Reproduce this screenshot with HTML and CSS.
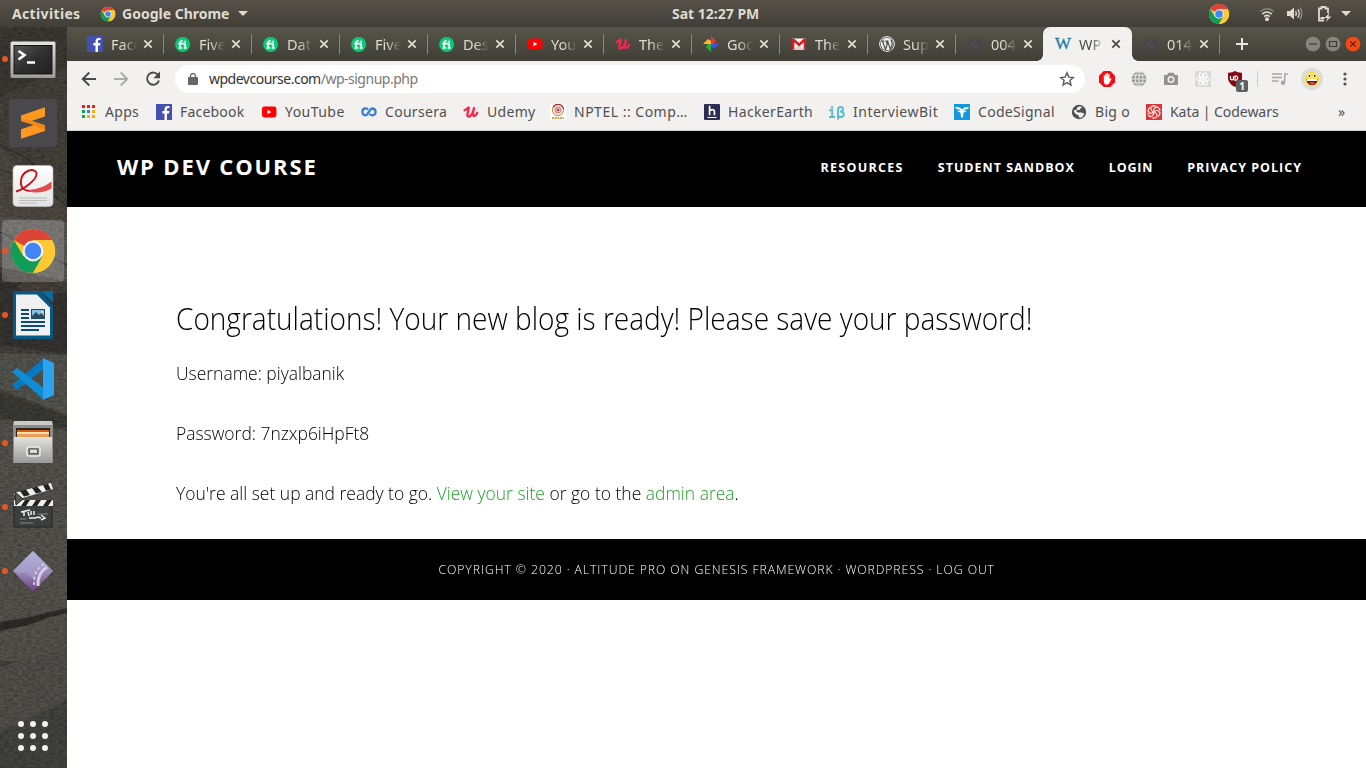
FILE: index.html
```html
<!DOCTYPE html>
<html lang="en">
<head>
<meta charset="utf-8">
<title>WP Dev Course</title>
<link rel="stylesheet" href="styles.css">
</head>
<body>
<svg class="defs" width="0" height="0">
  <defs>
    <linearGradient id="steel" x1="0" y1="0" x2="0" y2="1"><stop offset="0" stop-color="#e2e2e0"/><stop offset="1" stop-color="#999"/></linearGradient>
    <linearGradient id="screen" x1="0" y1="0" x2="1" y2="1"><stop offset="0" stop-color="#555"/><stop offset=".5" stop-color="#303030"/><stop offset="1" stop-color="#222"/></linearGradient>
    <linearGradient id="paper" x1="0" y1="0" x2="0" y2="1"><stop offset="0" stop-color="#fff"/><stop offset="1" stop-color="#e2e2e2"/></linearGradient>
    <linearGradient id="gem" x1="0" y1="0" x2="0" y2="1"><stop offset="0" stop-color="#bcc6ec"/><stop offset=".55" stop-color="#9886b4"/><stop offset="1" stop-color="#6c3f7c"/></linearGradient>
    <symbol id="chrome" viewBox="0 0 48 48"><circle cx="24" cy="24" r="22" fill="#fcc934"/><path d="M24 24L4.9 13A22 22 0 0 1 43.1 13H24z" fill="#db4437"/><path d="M4.9 13A22 22 0 0 0 24 46L33.5 29.5 24 24 14.5 29.5z" fill="#0f9d58"/><path d="M24 13h19.1A22 22 0 0 1 24 46l9.5-16.5z" fill="#fcc934"/><circle cx="24" cy="24" r="10.4" fill="#f1f1f1"/><circle cx="24" cy="24" r="8.2" fill="#4285f4"/></symbol>
    <symbol id="fb" viewBox="0 0 16 16"><path fill="#4550b0" d="M0 0h16v16H0z"/><path fill="#fff" d="M8.5 16V9.6H6.3V7.1h2.2V5.3c0-2.2 1.3-3.4 3.3-3.4.9 0 1.7.1 1.7.1v2h-1.1c-1.1 0-1.4.6-1.4 1.3v1.8h2.4l-.4 2.5h-2V16z"/></symbol>
    <symbol id="fi" viewBox="0 0 16 16"><circle cx="7.600" cy="8.400" r="7.500" fill="#0cca74"/><path fill="none" stroke="#fff" stroke-width="1.700" d="M5.200 12V6.400q0-1.600 2.400-1.300M3.300 7.700h6.900V12M3.500 12H7M8.600 12h3.200"/><circle cx="10" cy="5.400" r="1" fill="#fff"/></symbol>
    <symbol id="yt" viewBox="0 0 16 16"><rect x="1" y="2.500" width="14.400" height="11" rx="2.400" fill="#f00"/><path fill="#fff" d="M6.500 5.800v4.400L10.300 8z"/></symbol>
    <symbol id="udemy" viewBox="0 0 16 16"><path fill="none" stroke="#f5274a" stroke-width="2.300" stroke-linecap="round" d="M1.500 6.300C4.800 5 6.300 1.500 5.700 5 4.200 10.800 3.500 13 6.200 12.500c2-.5 3.900-4 5.100-9.200-1.800 6.800-1.700 9 .2 8.600 1.400-.4 2.100-1.500 2.700-3"/></symbol>
    <symbol id="photos" viewBox="0 0 16 16"><path fill="#e53935" d="M8 8V0l5 5-2 3z"/><path fill="#4451dd" d="M8 8h8l-5 5-3-2z"/><path fill="#26b33c" d="M8 8v8l-5-5 2-3z"/><path fill="#ffba1a" d="M8 8H0l5-5 3 2z"/></symbol>
    <symbol id="gmail" viewBox="0 0 16 16"><path fill="#f5f5f5" d="M1 2.500h14v11.200H1z"/><path fill="#d5d5d5" d="M3 13.700l5-5 5 5z"/><path fill="#d71c1c" d="M1 13.700V2.500h2L8 7l5-4.500h2v11.200h-2.300V6.300L8 10.400 3.300 6.300v7.400z"/></symbol>
    <symbol id="wp" viewBox="0 0 16 16"><circle cx="8" cy="8" r="7.400" fill="none" stroke="#eee" stroke-width="1"/><circle cx="8" cy="8" r="6.200" fill="#eee"/><path fill="none" stroke="#50504a" stroke-width="1.200" d="M2.500 5.200h2.800M3.600 5.500l3 8L8.300 8 7.200 5.200H6.400 9.500M8.600 5.500l3 8 1.800-6-1.200-2.300.4-1.500"/></symbol>
    <symbol id="globe" viewBox="0 0 16 16"><circle cx="8" cy="8" r="7.200" fill="currentColor"/><path fill="var(--cut)" d="M6.400 3.100c2-1 3.900-.5 4.900.5l-2.200.8.2 1.700-2.400-.4-2 1.400L7 8.400l3.600.1 2.900 1.300-2.200 3.300-2.800.8-.6-2.200-3.600-1.900-1.700-3 1.600-.9 1.700-.6z"/></symbol>
    <symbol id="cross" viewBox="0 0 10 10"><path fill="none" stroke="currentColor" stroke-width="1.800" d="M1.300 1.300l7.400 7.400M8.700 1.300L1.300 8.700"/></symbol>
  </defs>
</svg>

<header class="topbar">
  <span class="activities">Activities</span>
  <svg class="i16 app-icon"><use href="#chrome"/></svg>
  <span class="app-name">Google Chrome</span>
  <i class="caret"></i>
  <span class="clock">Sat 12:27 PM</span>
  <div class="tray">
    <svg width="22" height="22"><use href="#chrome"/></svg>
    <svg class="wifi" width="16" height="16" viewBox="0 0 16 16" fill="none" stroke-width="1.600"><path stroke="#85837c" d="M1.200 5.500Q8 0 14.800 5.500"/><path stroke="#dfdbd2" d="M3.200 8.100Q8 3.900 12.800 8.100M5.200 10.600Q8 8.100 10.800 10.600"/><circle cx="8" cy="13.200" r="2" fill="#dfdbd2"/></svg>
    <svg class="vol" width="16" height="16" viewBox="0 0 16 16" fill="none" stroke="#dfdbd2" stroke-width="1.300"><path fill="#dfdbd2" stroke="none" d="M0 5h3l4-3.500v12L3 10H0z"/><path d="M8.600 5q1.600 2.400 0 4.800M10.800 3.500q3 4 0 8"/><path stroke="#908e87" d="M13 1.700q3.700 5.800 0 11.600"/></svg>
    <svg class="bat" width="15" height="17" viewBox="0 0 15 17"><path fill="none" stroke="#dfdbd2" stroke-width="1.800" d="M7 15.500H2v-12h2.500V2h4v1.500H11V8"/><path fill="#dfdbd2" d="M3.500 12h4v2h-4zM12.700 7.500L7.500 13h3L8.800 17l5.500-5.500h-3z"/></svg>
    <i class="caret"></i>
  </div>
</header>

<div class="desktop">
  <nav class="dock">
    <svg class="rock" width="67" height="741">
      <filter id="grain"><feTurbulence type="fractalNoise" baseFrequency=".22 .5" numOctaves="3" seed="4"/><feColorMatrix values="0 0 0 0 0  0 0 0 0 0  0 0 0 0 0  1.2 0 0 0 -.38"/></filter>
      <path fill="#46423c" d="M0 0h67v741H0z"/>
      <path fill="#3b3a33" d="M0 0h67v40L0 70z"/>
      <path fill="#4f4a43" d="M0 120l67 60v60H0z"/>
      <path fill="#5b5954" d="M0 190l67 5v60L0 240z"/>
      <path fill="#363532" d="M0 245l30 25 37-5v62L0 318z"/>
      <path fill="#555550" d="M0 326l67 2v60L0 362z"/>
      <path fill="#3b3b37" d="M0 366l67 24v10L0 390z"/>
      <path fill="#56544e" d="M0 392l67 12v230H0z"/>
      <path fill="#2e2d2a" d="M0 595l25-4 42-10v5l-20 5-18 7L0 604z"/>
      <path fill="#52514c" d="M0 640l67-20v121H0z"/>
      <path fill="#444541" d="M0 706l67-33v68H0z"/>
      <path fill="none" stroke="#2c2b27" stroke-width="1.500" opacity=".6" d="M0 118l25 12 42 38M0 143l34 9 33 28M0 262l22-6M0 205l67 33"/>
      <path filter="url(#grain)" opacity=".45" d="M0 0h67v741H0z"/>
    </svg>
    <div class="dock-items">
      <a class="dock-item running"><svg width="48" height="48" viewBox="0 0 48 48"><rect x="1.500" y="6.500" width="45" height="36.500" rx="1.500" fill="url(#steel)"/><path fill="#eee" d="M4 9h40v31.500H4z" opacity=".3"/><rect x="5" y="10.500" width="38" height="28.500" fill="url(#screen)" stroke="#111"/><path fill="none" stroke="#fff" stroke-width="2.600" d="M9.500 16l6 4-6 4.500M18 27.500h8"/></svg></a>
      <a class="dock-item"><svg width="48" height="48" viewBox="0 0 48 48"><rect width="48" height="48" rx="3" fill="#49494b"/><path fill="#ff9821" d="M12 16.500L36 8.300v9.200L23 21.800l13 4.400v5.700L12 39.700v-9.400l12.800-4.200L12 22z"/><path fill="#e57a0b" d="M23 21.800l13 4.400v5.200l-11.200-5.300L12 22.200v-2z" opacity=".55"/></svg></a>
      <a class="dock-item"><svg width="48" height="48" viewBox="0 1.500 48 48"><rect x="4" y="4" width="40" height="41" rx="4" fill="url(#paper)" stroke="#bbb" stroke-width=".7"/><path fill="none" stroke="#c8131d" stroke-width="1.900" d="M7 30C14 28 29 18 27.500 11.500 25.500 5.500 13 9 12 19 11 28 17 30 24 29.500"/><path fill="#dd4b4c" d="M20 28.500Q34 27 42.500 20v7q-10 5.500-22.500 3.200z"/><path stroke="#bbb" d="M10 36.500h28M10 39h28M10 41.500h18"/></svg></a>
      <a class="dock-item running focused"><svg width="48" height="48"><use href="#chrome"/></svg></a>
      <a class="dock-item running"><svg width="48" height="48" viewBox="0 0 48 48"><path fill="#075988" d="M6 0h25l13 15v31q0 2-2 2H6q-2 0-2-2V2q0-2 2-2z"/><path fill="#0a6a9f" d="M32 0h12v12z"/><path fill="#f0f0f0" d="M7 3.500h21l13 13v28H7z"/><path fill="#075988" d="M28 3.500h3l10 11v2z"/><path stroke="#0b4b78" stroke-width="2" d="M12 19h8M12 23h8M12 27h8M12 31h24M12 35h24M12 39h18"/><path fill="#1b4a68" d="M22 18h14v10H22z"/><path fill="#83c2e9" d="M23 19h12v7H23z"/><path fill="#34495a" d="M23 27v-2l4-4 3 3 2-2 3 3v2z"/><circle cx="33" cy="21" r="1" fill="#ffe26a"/></svg></a>
      <a class="dock-item"><svg width="48" height="48" viewBox="0 0 48 48"><path fill="#0879bf" d="M3 30l5 5L35 14V3z"/><path fill="#108cd4" d="M3 17l5-4 27 20v12z"/><path fill="#2ba3ee" d="M34 3l11 5v32l-11 5z"/></svg></a>
      <a class="dock-item running"><svg width="48" height="48" viewBox="0 0 48 48"><path fill="#c9c9c7" d="M5 2h38l1 5H4z"/><path fill="#8d8d8b" d="M4 6h40v38H4z"/><path fill="#292620" d="M7 9h34v10H7z"/><path fill="#d85b16" d="M8 11h32v8H8z"/><path fill="#f9dfaa" d="M8 13h32v2.500H8z"/><path fill="#eaa250" d="M8 16h32v3H8z"/><path fill="url(#steel)" d="M5 18h38v26H5z"/><rect x="18" y="28" width="13" height="9" rx="2" fill="#888" stroke="#eee" stroke-width="1.500"/><path fill="#ddd" stroke="#555" d="M20.500 30h8v4.500h-8z"/></svg></a>
      <a class="dock-item running"><svg width="48" height="48" viewBox="0 0 48 48"><path fill="#3d3e3e" stroke="#222" d="M5 22h38v22H5z"/><path fill="#eee" d="M5 10L42 0l2 6L7 17zM5 17h39v6H5z"/><path fill="#222" d="M11 8l6-1.600 4 5.500-6 1.600zM23 5l5-1.400 5 5.300-6 1.500zM34 2l5-1.300 3 5.800-5 1.300zM16 17h5l-4 6h-5zM27 17h5l-4 6h-5zM38 17h5l-4 6h-5z"/><path fill="#555" stroke="#222" d="M6 9l8 7-7 6z"/><path fill="none" stroke="#eee" stroke-width="1.500" d="M12 29l9-2M15 28v5M19 29l1 4M22 28v4M25 28v4M20 35h6l3-1 3 1M32 32l4 3-4 2"/><path stroke="#888" d="M11 40h13M11 36h6M29 31h10"/></svg></a>
      <a class="dock-item running"><svg width="48" height="48" viewBox="0 0 48 48"><path fill="url(#gem)" d="M24 4l20 20-20 21L4 24z"/><path fill="#a9a5cf" opacity=".55" d="M24 4l14 14q-12 5-12 18l-3-6-4-1-1-4-6 1-8-2z"/><path fill="none" stroke="#dacde6" stroke-width="3" d="M38 20q-10 6-9 19"/><path fill="none" stroke="#dacde6" stroke-width="2" stroke-dasharray="2.500 3" d="M35 17q-12 7-9.500 24"/></svg></a>
    </div>
    <svg class="grid-icon" width="32" height="32" viewBox="0 0 32 32" fill="#f2f1f0"><circle cx="4" cy="4" r="3"/><circle cx="16" cy="4" r="3"/><circle cx="28" cy="4" r="3"/><circle cx="4" cy="16" r="3"/><circle cx="16" cy="16" r="3"/><circle cx="28" cy="16" r="3"/><circle cx="4" cy="28" r="3"/><circle cx="16" cy="28" r="3"/><circle cx="28" cy="28" r="3"/></svg>
  </nav>

  <div class="browser">
    <div class="tabs">
      <div class="tab"><svg class="i16"><use href="#fb"/></svg><span>Face</span><svg class="x"><use href="#cross"/></svg></div>
      <div class="tab"><svg class="i16"><use href="#fi"/></svg><span>Five</span><svg class="x"><use href="#cross"/></svg></div>
      <div class="tab"><svg class="i16"><use href="#fi"/></svg><span>Dat</span><svg class="x"><use href="#cross"/></svg></div>
      <div class="tab"><svg class="i16"><use href="#fi"/></svg><span>Five</span><svg class="x"><use href="#cross"/></svg></div>
      <div class="tab"><svg class="i16"><use href="#fi"/></svg><span>Des</span><svg class="x"><use href="#cross"/></svg></div>
      <div class="tab"><svg class="i16"><use href="#yt"/></svg><span>You</span><svg class="x"><use href="#cross"/></svg></div>
      <div class="tab"><svg class="i16"><use href="#udemy"/></svg><span>The</span><svg class="x"><use href="#cross"/></svg></div>
      <div class="tab"><svg class="i16"><use href="#photos"/></svg><span>Goo</span><svg class="x"><use href="#cross"/></svg></div>
      <div class="tab"><svg class="i16"><use href="#gmail"/></svg><span>The</span><svg class="x"><use href="#cross"/></svg></div>
      <div class="tab"><svg class="i16"><use href="#wp"/></svg><span>Sup</span><svg class="x"><use href="#cross"/></svg></div>
      <div class="tab before-active"><svg class="i16 dim"><use href="#globe"/></svg><span>004</span><svg class="x"><use href="#cross"/></svg></div>
      <div class="tab active"><b class="w-icon">W</b><span>WP</span><svg class="x"><use href="#cross"/></svg></div>
      <div class="tab"><svg class="i16 dim"><use href="#globe"/></svg><span>014</span><svg class="x"><use href="#cross"/></svg></div>
      <svg class="new-tab" width="14" height="14" viewBox="0 0 14 14"><path stroke="#e8e6e0" stroke-width="2" d="M7 1v12M1 7h12"/></svg>
      <div class="window-buttons">
        <svg width="16" height="16" viewBox="0 0 16 16"><circle cx="8" cy="8" r="7.800" fill="#85847d" stroke="#3a3934" stroke-width=".6"/><path stroke="#3a3934" stroke-width="1.200" d="M4 8h8"/></svg>
        <svg width="16" height="16" viewBox="0 0 16 16"><circle cx="8" cy="8" r="7.800" fill="#85847d" stroke="#3a3934" stroke-width=".6"/><path fill="none" stroke="#3a3934" stroke-width="1.200" d="M4.500 5.500h7v5h-7z"/></svg>
        <svg width="16" height="16" viewBox="0 0 16 16"><circle cx="8" cy="8" r="7.800" fill="#f04a15" stroke="#3a3934" stroke-width=".6"/><path stroke="#5b1f0c" stroke-width="1.200" d="M5.300 5.300l5.400 5.400M10.700 5.300l-5.400 5.400"/></svg>
      </div>
    </div>

    <div class="toolbar">
      <svg class="nav-icon" width="16" height="16" viewBox="0 0 16 16" fill="none" stroke="#48494a" stroke-width="1.900"><path d="M15 8H2M8.300 1.500L1.700 8l6.600 6.500"/></svg>
      <svg class="nav-icon fwd" width="16" height="16" viewBox="0 0 16 16" fill="none" stroke="#aaa" stroke-width="1.900"><path d="M1 8h13M7.700 1.500L14.300 8l-6.600 6.500"/></svg>
      <svg class="nav-icon" width="16" height="16" viewBox="0 0 16 16" fill="none" stroke="#48494a" stroke-width="1.900"><path d="M13.400 4.500A6.100 6.100 0 1 0 14 9.500"/><path fill="#48494a" stroke="none" d="M15 .5v6.700H8.300z"/></svg>
      <div class="omnibox">
        <svg class="lock" width="10" height="12" viewBox="0 0 10 12"><path fill="#666" d="M1 4h8q1 0 1 1v6q0 1-1 1H1q-1 0-1-1V5q0-1 1-1z"/><path fill="none" stroke="#666" stroke-width="1.300" d="M2.500 4.500V3a2.500 2.400 0 0 1 5 0v1.500"/></svg>
        <span class="url"><b>wpdevcourse.com</b>/wp-signup.php</span>
        <svg class="star" width="16" height="16" viewBox="0 0 16 16"><path fill="none" stroke="#5a5b5d" stroke-width="1.400" d="M8 1.900l1.800 4.200 4.600.4-3.500 3 1.100 4.500L8 11.600 4 14l1.100-4.500-3.500-3 4.600-.4z"/></svg>
      </div>
      <div class="extensions">
        <svg width="16" height="16" viewBox="0 0 16 16"><path fill="#f40d12" d="M4.700 0h6.600L16 4.700v6.600L11.300 16H4.700L0 11.300V4.700z"/><path fill="#fff" d="M4.800 4.200q.7-.5 1 .2l.3 2.500V3q.7-.8 1.200 0v3.500L7.600 2.300q.8-.7 1.300 0l.1 4.200.4-3.400q.8-.5 1.200.2v5l1-1q1-.2.9.5L10 12.700q-2.500 2-4.500 0-.9-1.500-.7-4z"/></svg>
        <svg width="16" height="16" viewBox="0 0 16 16"><circle cx="8" cy="8" r="7.400" fill="#999"/><path fill="none" stroke="#eee" stroke-width=".9" d="M8 0v16M0 8h16M1.500 4.300h13M1.500 11.700h13"/><ellipse cx="8" cy="8" rx="3.900" ry="7.400" fill="none" stroke="#eee" stroke-width=".9"/></svg>
        <svg width="16" height="16" viewBox="0 0 16 16"><path fill="#929292" d="M1 4h3l1.500-2.200h5L12 4h3v10H1z"/><circle cx="8" cy="8.500" r="3.500" fill="#f2f1ef"/><circle cx="8" cy="8.500" r="1.900" fill="#929292"/></svg>
        <svg width="16" height="16" viewBox="0 0 16 16"><path fill="#d9d9d7" d="M0 0h16v16H0z"/><g fill="none" stroke="#fff" stroke-width="1"><ellipse cx="8" cy="8" rx="6.600" ry="2.500"/><ellipse cx="8" cy="8" rx="6.600" ry="2.500" transform="rotate(60 8 8)"/><ellipse cx="8" cy="8" rx="6.600" ry="2.500" transform="rotate(120 8 8)"/></g><circle cx="8" cy="8" r="1.500" fill="#fff"/></svg>
        <div class="ublock"><svg width="16" height="16" viewBox="0 0 16 16"><path fill="#850912" d="M8 0q3 2 7 1.800V8q-1 5-7 8-6-3-7-8V1.800Q5 2 8 0z"/><path fill="none" stroke="#fff" stroke-width="1.200" d="M3.500 5v3q1.500 1.500 3 0V5M8 9.500V5h1.500q2.500 1.800 0 4z"/></svg><em>1</em></div>
      </div>
      <i class="divider"></i>
      <svg class="queue" width="16" height="12" viewBox="0 0 16 12"><path stroke="#a5a5a5" stroke-width="1.600" d="M0 1h10M0 4.500h10M0 8h6.500M12 1h4"/><path stroke="#a5a5a5" stroke-width="1.500" d="M12.700 1v8.500"/><circle cx="11" cy="9.700" r="2.200" fill="#a5a5a5"/></svg>
      <div class="avatar"><svg width="16" height="16" viewBox="0 0 16 16"><circle cx="8" cy="8" r="7.600" fill="#ffdc48"/><path fill="#641414" d="M2.500 8h11q-.4 6-5.500 6T2.500 8z"/><path fill="#fff" d="M3 8h10v2H3z"/><path fill="#e54f55" d="M5 12q3-2 6 0-2 2.500-6 0z"/><ellipse cx="5" cy="4.500" rx="1.500" ry="2" fill="#fff"/><ellipse cx="11" cy="4.500" rx="1.500" ry="2" fill="#fff"/><circle cx="5.300" cy="4.800" r=".9"/><circle cx="10.800" cy="4.800" r=".9"/></svg></div>
      <svg class="menu" width="4" height="14" viewBox="0 0 4 14" fill="#505153"><circle cx="2" cy="2" r="1.600"/><circle cx="2" cy="7" r="1.600"/><circle cx="2" cy="12" r="1.600"/></svg>
    </div>

    <div class="bookmarks">
      <a class="bm apps"><svg width="16" height="16" viewBox="0 0 16 16"><path fill="#e8201c" d="M1 1h3v3H1zM6 1h3v3H6zM11 1h3v3h-3z"/><path fill="#16a34e" d="M1 6h3v3H1zM1 11h3v3H1z"/><path fill="#3b7ced" d="M6 6h3v3H6z"/><path fill="#f9ad0a" d="M11 6h3v3h-3zM6 11h3v3H6zM11 11h3v3h-3z"/></svg><span>Apps</span></a>
      <a class="bm facebook"><svg class="i16"><use href="#fb"/></svg><span>Facebook</span></a>
      <a class="bm youtube"><svg class="i16"><use href="#yt"/></svg><span>YouTube</span></a>
      <a class="bm coursera"><svg width="16" height="16" viewBox="0 0 16 16"><path fill="none" stroke="#3a80d2" stroke-width="2.300" d="M7 5.500Q5.500 4.300 3.800 4.500 1.400 5 1.400 8q.2 3.300 3.100 3.300C7.500 11.300 8 4.500 11.500 4.500q3 .2 3.100 3.500-.2 3.300-3.100 3.300-1.600 0-2.800-1.400"/></svg><span>Coursera</span></a>
      <a class="bm udemy"><svg class="i16"><use href="#udemy"/></svg><span>Udemy</span></a>
      <a class="bm nptel"><svg width="16" height="16" viewBox="0 0 16 16"><path fill="#fff" d="M0 0h16v16H0z"/><circle cx="8" cy="6" r="5.600" fill="#f8e9d6" stroke="#d08a35"/><path fill="none" stroke="#a8283c" stroke-width="1.100" d="M3 3.500A5.600 5.600 0 0 1 13.500 5"/><circle cx="8" cy="6" r="3" fill="#ddb3ad" stroke="#cc8180"/><circle cx="8" cy="6" r="1" fill="#9a2640"/><path stroke="#e49a40" stroke-width="2" stroke-dasharray="2 .7" d="M2 14h12"/></svg><span>NPTEL :: Comp…</span></a>
      <a class="bm hacker"><svg width="16" height="16" viewBox="0 0 16 16"><rect width="16" height="16" rx="1" fill="#2c2c55"/><path fill="none" stroke="#fff" stroke-width="1.700" d="M5.600 1.700v9.500M5.600 6.500q4.800-2 4.800 1v3.700"/><path stroke="#fff" d="M3.500 13.500h9"/></svg><span>HackerEarth</span></a>
      <a class="bm interview"><svg width="16" height="16" viewBox="0 0 16 16"><path fill="none" stroke="#5abed2" stroke-width="2" d="M0 6.300h3.200V13M0 13h6M9 15.500V6q0-3 2.700-3 2.300 0 2.300 2.200 0 2.300-3 2.300 3.800 0 3.800 2.800 0 2.700-2.800 2.700Q10 13 9 12"/><circle cx="3" cy="3.500" r="1.300" fill="#5abed2"/></svg><span>InterviewBit</span></a>
      <a class="bm signal"><svg width="16" height="16" viewBox="0 0 16 16"><path fill="#1099df" d="M0 0h16v16H0z"/><path fill="#fff" d="M.8 3l5 .5L8 5.600l2.200-2.100 5-.5-1.500 2-3.200.6-.6 1.200 2.800-.3-1.200 1.600-2 .3L9 13.500H7L6.500 8.400l-2-.3-1.200-1.600 2.800.3-.6-1.200L2.300 5z"/></svg><span>CodeSignal</span></a>
      <a class="bm bigo"><svg class="i16"><use href="#globe"/></svg><span>Big o</span></a>
      <a class="bm kata"><svg width="16" height="16" viewBox="0 0 16 16"><path fill="#dc3637" d="M0 0h16v16H0z"/><g fill="none" stroke="#ffe9e9" stroke-width="1.100"><circle cx="8" cy="8" r="6.100" stroke-dasharray="5 1.300"/><path d="M8 8Q3 6 6 2.200M8 8Q7 2.500 12 3.200M8 8q4-3.500 5.800 1.300M8 8q5 2.500 1.800 6M8 8q-.5 5.500-5.300 4.200M8 8Q3.800 11 2.200 6.500"/></g></svg><span>Kata | Codewars</span></a>
      <span class="more">»</span>
    </div>

    <main class="page">
      <div class="site-header">
        <div class="site-title">WP DEV COURSE</div>
        <nav class="site-nav"><a class="n1">RESOURCES</a><a class="n2">STUDENT SANDBOX</a><a class="n3">LOGIN</a><a class="n4">PRIVACY POLICY</a></nav>
      </div>
      <section class="content">
        <h2>Congratulations! Your new blog is ready! Please save your password!</h2>
        <p class="user">Username: piyalbanik</p>
        <p class="pass">Password: 7nzxp6iHpFt8</p>
        <p class="ready">You're all set up and ready to go. <a>View your site</a> or go to the <a>admin area</a>.</p>
      </section>
      <footer class="site-footer"><p>COPYRIGHT © 2020 · ALTITUDE PRO ON GENESIS FRAMEWORK · WORDPRESS · LOG OUT</p></footer>
    </main>
  </div>
</div>
</body>
</html>
```

FILE: styles.css
```css
* { box-sizing: border-box; }
body { margin: 0; width: 1366px; height: 768px; overflow: hidden; background: #fff; font-family: "Noto Sans", sans-serif; }
svg { display: block; flex: none; }
.defs { position: absolute; }
.i16 { width: 16px; height: 16px; }
.caret { width: 0; border: 5px solid transparent; border-top-color: #dfdbd2; border-bottom: 0; }

.topbar { display: flex; align-items: center; height: 27px; padding-left: 12px; background: linear-gradient(#575249, #403e38); color: #dfdbd2; font-size: 14px; font-weight: 700; white-space: nowrap; }
.topbar span { margin-top: -1px; }
.activities { width: 88px; letter-spacing: .35px; }
.topbar .app-name { width: 111px; margin-left: 6px; margin-right: 5px; }
.topbar .clock { margin-left: 424px; width: 92px; }
.tray { display: flex; align-items: center; margin-left: auto; padding-right: 15px; }
.wifi { margin-left: 29px; }
.vol { margin-left: 12px; }
.bat { margin-left: 14px; }
.tray .caret { margin-left: 9px; }

.desktop { display: flex; height: 741px; }
.dock { position: relative; width: 67px; flex: none; overflow: hidden; background: #46423a; }
.rock { position: absolute; inset: 0; }
.dock-items { position: relative; display: flex; flex-direction: column; padding: 1px 2px 0; gap: 2px; }
.dock-item { display: flex; align-items: center; justify-content: center; position: relative; width: 62px; height: 62px; border-radius: 4px; }
.focused { background: rgba(255,255,255,.2); }
.running::before { content: ""; position: absolute; left: 0; top: 28px; width: 6px; height: 6px; border-radius: 3px; background: #e95420; }
.grid-icon { position: absolute; left: 17px; bottom: 16px; }

.browser { flex: 1; min-width: 0; display: flex; flex-direction: column; }
.tabs { display: flex; height: 34px; padding-left: 9px; background: linear-gradient(#575549, #403f38); color: #dfdbd2; font-size: 14.5px; }
.tab { position: relative; display: flex; align-items: center; width: 88px; padding-left: 11px; }
.tab::after { content: ""; position: absolute; right: 0; top: 7px; height: 20px; width: 1px; background: #8a887f; }
.tab.before-active::after { display: none; }
.tab span { width: 26px; margin: -1px 6px 0 8px; overflow: hidden; white-space: nowrap; -webkit-mask-image: linear-gradient(90deg, #000 45%, transparent 100%); mask-image: linear-gradient(90deg, #000 45%, transparent 100%); }
.x { width: 10px; height: 10px; }
.tab.active { width: 89px; margin-left: -1px; padding-left: 12px; background: #f2f1ef; color: #4a4b4c; border-radius: 7px 7px 0 0; }
.tab.active::before, .tab.active::after { content: ""; position: absolute; top: auto; bottom: 0; width: 6px; height: 6px; }
.tab.active::before { left: -6px; background: radial-gradient(circle at 0 0, transparent 5.5px, #f2f1ef 6px); }
.tab.active::after { right: -6px; background: radial-gradient(circle at 100% 0, transparent 5.5px, #f2f1ef 6px); }
.w-icon { width: 16px; color: #1a7ba5; font: 400 17px "Liberation Serif", serif; -webkit-text-stroke: .3px #1a7ba5; }
.dim { color: #47474a; --cut: #4e4e49; }
.new-tab { margin: 10px 0 0 15px; }
.window-buttons { display: flex; gap: 4px; align-items: center; margin-left: auto; padding-right: 5px; }

.toolbar { display: flex; align-items: center; height: 36px; padding: 0 0 0 14px; background: #f2f1ef; }
.fwd { margin: 0 16px; }
.omnibox { display: flex; align-items: center; width: 910px; height: 28px; margin-left: 14px; padding: 0 10px 0 13px; border-radius: 14px; background: #fff; }
.url { margin: -1px 0 0 11px; color: #77787a; font-size: 14px; letter-spacing: -.5px; }
.url b { color: #333; font-weight: 400; }
.star { margin-left: auto; }
.extensions { display: flex; gap: 16px; margin-left: 14px; }
.ublock { position: relative; }
.ublock em { position: absolute; left: 9px; top: 9px; width: 12px; height: 12px; border-radius: 2px; background: #5f6062; color: #fff; font: 700 10px/12px "Noto Sans", sans-serif; text-align: center; }
.divider { width: 1px; height: 16px; margin-left: 14px; background: #ccc; }
.queue { margin-left: 14px; }
.avatar { display: grid; place-items: center; width: 22px; height: 22px; margin-left: 13px; border-radius: 50%; background: #dcdcda; }
.menu { margin-left: 20px; }

.bookmarks { display: flex; align-items: center; height: 34px; padding: 0 0 4px 14px; background: #f2f1ef; border-bottom: 1px solid #d5d6d1; color: #4f5052; --cut: #f2f1ef; font-size: 14px; white-space: nowrap; letter-spacing: .3px; }
.bm { display: flex; align-items: center; gap: 8px; }
.apps { width: 75px; }
.facebook { width: 105px; letter-spacing: .2px; }
.youtube { width: 100px; letter-spacing: .45px; }
.coursera { width: 102px; }
.udemy { width: 87px; }
.nptel { width: 154px; letter-spacing: .5px; }
.hacker { width: 125px; letter-spacing: .35px; }
.interview { width: 125px; letter-spacing: .5px; }
.signal { width: 117px; }
.bigo { width: 75px; }
.kata { width: 192px; letter-spacing: -.05px; }

.page { flex: 1; background: #fff; font-family: "Open Sans", sans-serif; }
.site-header { display: flex; align-items: center; justify-content: space-between; height: 76px; padding: 0 64px 3px 50px; background: #000; color: #fff; font-weight: 700; white-space: nowrap; }
.site-title { margin-bottom: 3px; font-size: 22px; letter-spacing: 1.85px; }
.site-nav { display: flex; gap: 34px; font-size: 12.5px; letter-spacing: 1px; }
.n1 { letter-spacing: 1.3px; }
.n3 { letter-spacing: .8px; }
.content { height: 332px; padding: 87px 0 0 109px; color: #000; font-weight: 300; }
.content h2, .content p { width: max-content; transform-origin: left; white-space: nowrap; }
.content h2 { margin: 0; height: 50px; font-size: 31px; line-height: 49px; font-weight: 300; transform: scaleX(.904); }
.content p { margin: 0 0 30px; font-size: 19px; line-height: 30px; transform: scaleX(.919); }
.content .user { margin-top: 14px; }
.content a { color: #22a12a; }
.site-footer { display: flex; justify-content: center; height: 61px; background: #000; color: #fff; font-size: 13.5px; font-weight: 300; line-height: 61px; letter-spacing: 1px; }
.site-footer p { margin: 0; white-space: nowrap; transform: scaleX(.907); }
```
